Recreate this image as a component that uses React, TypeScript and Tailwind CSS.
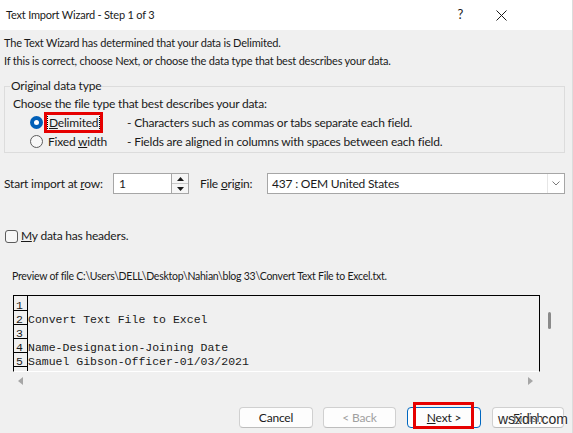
import React from 'react';

function Radio({ checked }: { checked?: boolean }) {
  if (checked) {
    return (
      <span className="w-[13px] h-[13px] rounded-full bg-[#005fb8] flex items-center justify-center shrink-0">
        <span className="w-[5px] h-[5px] rounded-full bg-white" />
      </span>
    );
  }
  return <span className="w-[13px] h-[13px] rounded-full border border-[#5c5c5c] bg-[#f7f7f7] shrink-0" />;
}

function Btn({ children, primary, disabled }: { children: React.ReactNode; primary?: boolean; disabled?: boolean }) {
  return (
    <div
      className={
        'h-[21px] rounded-[4px] flex items-center justify-center text-[12px] ' +
        (primary
          ? 'border border-[#0067c0] bg-[#fdfdfd] '
          : 'border border-[#d0d0d0] border-b-[#bdbdbd] bg-[#fdfdfd] ') +
        (disabled ? 'text-[#a0a0a0]' : 'text-[#1a1a1a]')
      }
    >
      {children}
    </div>
  );
}

const previewLines = ['', 'Convert Text File to Excel', '', 'Name-Designation-Joining Date', 'Samuel Gibson-Officer-01/03/2021', ''];

export default function App() {
  return (
    <div className="w-[573px] h-[433px] overflow-hidden bg-[#f0f0f0] font-['Lato',sans-serif] text-[12px] tracking-[-0.2px] text-[#1a1a1a] border-r border-[#dcdcdc]">
      {/* title bar */}
      <div className="h-[30px] bg-white flex items-center pl-[6px] text-[11px]">
        <span>Text Import Wizard - Step 1 of 3</span>
        <span className="ml-auto mr-[33px] text-[13px]">?</span>
        <svg width="11" height="11" viewBox="0 0 11 11" className="mr-[65px]">
          <path d="M0.5 0.5 L10.5 10.5 M10.5 0.5 L0.5 10.5" stroke="#1a1a1a" strokeWidth="1" />
        </svg>
      </div>

      <div className="px-[4px]">
        <div className="mt-[4px] h-[18px] flex items-center text-[11px]">
          The Text Wizard has determined that your data is Delimited.
        </div>
        <div className="h-[18px] flex items-center text-[11px]">
          If this is correct, choose Next, or choose the data type that best describes your data.
        </div>

        <fieldset className="mt-[7px] w-[561px] border border-[#dcdcdc] pb-[1px]">
          <legend className="ml-[5px] px-[1px] h-[18px] leading-[18px]">Original data type</legend>
          <div className="pl-[8px]">
            <div className="h-[18px] flex items-center">Choose the file type that best describes your data:</div>
            <div className="h-[19px] flex items-center pl-[17px]">
              <Radio checked />
              <div className="relative w-[79px] ml-[5px] h-full flex items-center">
                <span className="border border-dotted border-black px-[1px] leading-[15px] -ml-[1px]">
                  <span className="underline">D</span>elimited
                </span>
                <div className="absolute left-[-4px] top-[-1px] w-[59px] h-[21px] border-[3px] border-[#e60000]" />
              </div>
              <span>- Characters such as commas or tabs separate each field.</span>
            </div>
            <div className="h-[19px] flex items-center pl-[17px]">
              <Radio />
              <div className="w-[79px] ml-[5px]">
                Fixed <span className="underline">w</span>idth
              </div>
              <span>- Fields are aligned in columns with spaces between each field.</span>
            </div>
          </div>
        </fieldset>

        {/* start row + file origin */}
        <div className="mt-[20px] h-[21px] flex items-center">
          <span className="w-[109px]">
            Start import at <span className="underline">r</span>ow:
          </span>
          <div className="w-[59px] h-full bg-white border border-[#a6a6a6] flex items-center pl-[5px]">1</div>
          <div className="w-[17px] h-full border border-[#a6a6a6] border-l-0 bg-[#f6f6f6] flex flex-col">
            <div className="flex-1 flex items-center justify-center border-b border-[#c8c8c8]">
              <svg width="7" height="4" viewBox="0 0 7 4"><path d="M3.5 0 L7 4 L0 4 Z" fill="#1a1a1a" /></svg>
            </div>
            <div className="flex-1 flex items-center justify-center">
              <svg width="7" height="4" viewBox="0 0 7 4"><path d="M0 0 L7 0 L3.5 4 Z" fill="#1a1a1a" /></svg>
            </div>
          </div>
          <span className="ml-[11px] w-[67px]">
            File <span className="underline">o</span>rigin:
          </span>
          <div className="w-[298px] h-full bg-white border border-[#a6a6a6] flex items-center">
            <span className="pl-[4px] flex-1">437 : OEM United States</span>
            <div className="w-[17px] h-full border-l border-[#e6e6e6] flex items-center justify-center">
              <svg width="8" height="5" viewBox="0 0 8 5">
                <path d="M0.5 0.5 L4 4 L7.5 0.5" fill="none" stroke="#7a7a7a" strokeWidth="1" />
              </svg>
            </div>
          </div>
        </div>

        {/* headers checkbox */}
        <div className="mt-[33px] h-[18px] flex items-center">
          <span className="ml-[1px] w-[13px] h-[13px] rounded-[3px] border border-[#5c5c5c] bg-[#f7f7f7]" />
          <span className="ml-[3px]">
            <span className="underline">M</span>y data has headers.
          </span>
        </div>

        <div className="mt-[23px] h-[18px] flex items-center pl-[8px] text-[10.5px] tracking-[-0.25px]">
          Preview of file C:\Users\DELL\Desktop\Nahian\blog 33\Convert Text File to Excel.txt.
        </div>

        {/* preview grid */}
        <div className="mt-[9px] ml-[9px] flex">
          <div className="w-[527px]">
            <div className="h-[77px] border-t border-l border-r border-black border-b border-b-white overflow-hidden flex font-['Liberation_Mono',monospace] text-[11.5px] tracking-normal text-[#1a1a1a]">
              <div className="w-[14px] border-r border-black pt-[1px]">
                {previewLines.map((_, i) => (
                  <div key={i} className="h-[14px] border-b border-black leading-[13px] pl-[2px] pt-[2px]">
                    {i + 1}
                  </div>
                ))}
              </div>
              <div className="flex-1 pt-[1px]">
                {previewLines.map((line, i) => (
                  <div key={i} className="h-[14px] leading-[13px] pt-[2px] whitespace-pre">
                    {line}
                  </div>
                ))}
              </div>
            </div>
            <div className="h-[18px] flex items-center justify-between px-[5px]">
              <svg width="5" height="8" viewBox="0 0 5 8"><path d="M5 0 L5 8 L0 4 Z" fill="#a6a6a6" /></svg>
              <svg width="5" height="8" viewBox="0 0 5 8" className="mr-[2px]"><path d="M0 0 L0 8 L5 4 Z" fill="#a6a6a6" /></svg>
            </div>
          </div>
          <div className="w-[17px]">
            <div className="mt-[17px] ml-[8px] w-[3px] h-[17px] rounded-full bg-[#8a8a8a]" />
          </div>
        </div>

        {/* buttons */}
        <div className="mt-[17px] ml-[235px] flex">
          <div className="w-[74px]">
            <Btn>Cancel</Btn>
          </div>
          <div className="w-[73px] ml-[10px]">
            <Btn disabled>&lt; Back</Btn>
          </div>
          <div className="w-[74px] ml-[11px] relative">
            <Btn primary>
              <span>
                <span className="underline">N</span>ext &gt;
              </span>
            </Btn>
            <div className="absolute left-[6px] top-[-5px] w-[61px] h-[27px] border-[3px] border-[#e60000]" />
          </div>
          <div className="w-[72px] ml-[11px] relative">
            <Btn>
              <span>
                <span className="underline">F</span>inish
              </span>
            </Btn>
            <span className="absolute left-[6px] top-[3px] text-[14px] leading-[18px] tracking-normal text-[#2a2a2a] font-['Liberation_Sans',sans-serif] [text-shadow:0_0_2px_#fff,0_0_2px_#fff]">
              wsxdn.com
            </span>
          </div>
        </div>
      </div>
    </div>
  );
}
